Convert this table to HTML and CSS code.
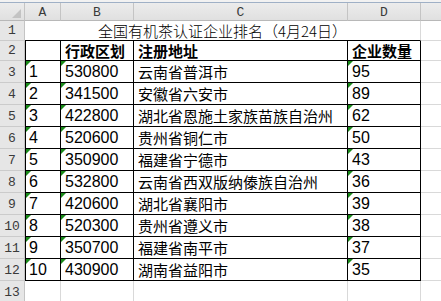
FILE: index.html
```html
<!DOCTYPE html>
<html>
<head>
<meta charset="utf-8">
<link rel="stylesheet" href="styles.css">
</head>
<body>
<div class="strip"></div>
<div class="sheet">
  <div class="ch corner"><span class="selall"></span></div>
  <div class="ch">A</div>
  <div class="ch">B</div>
  <div class="ch">C</div>
  <div class="ch">D</div>
  <div class="ch last"></div>

  <div class="rh">1</div>
  <div class="title zh">全国有机茶认证企业排名（4月24日）</div>
  <div class="cell e"></div>

  <div class="rh">2</div>
  <div class="t ta"></div>
  <div class="t zh b">行政区划</div>
  <div class="t zh b">注册地址</div>
  <div class="t zh b">企业数量</div>
  <div class="cell e"></div>

  <div class="rh">3</div>
  <div class="t ta tri num">1</div>
  <div class="t tri num">530800</div>
  <div class="t zh">云南省普洱市</div>
  <div class="t tri num">95</div>
  <div class="cell e"></div>

  <div class="rh">4</div>
  <div class="t ta tri num">2</div>
  <div class="t tri num">341500</div>
  <div class="t zh">安徽省六安市</div>
  <div class="t tri num">89</div>
  <div class="cell e"></div>

  <div class="rh">5</div>
  <div class="t ta tri num">3</div>
  <div class="t tri num">422800</div>
  <div class="t zh">湖北省恩施土家族苗族自治州</div>
  <div class="t tri num">62</div>
  <div class="cell e"></div>

  <div class="rh">6</div>
  <div class="t ta tri num">4</div>
  <div class="t tri num">520600</div>
  <div class="t zh">贵州省铜仁市</div>
  <div class="t tri num">50</div>
  <div class="cell e"></div>

  <div class="rh">7</div>
  <div class="t ta tri num">5</div>
  <div class="t tri num">350900</div>
  <div class="t zh">福建省宁德市</div>
  <div class="t tri num">43</div>
  <div class="cell e"></div>

  <div class="rh">8</div>
  <div class="t ta tri num">6</div>
  <div class="t tri num">532800</div>
  <div class="t zh">云南省西双版纳傣族自治州</div>
  <div class="t tri num">36</div>
  <div class="cell e"></div>

  <div class="rh">9</div>
  <div class="t ta tri num">7</div>
  <div class="t tri num">420600</div>
  <div class="t zh">湖北省襄阳市</div>
  <div class="t tri num">39</div>
  <div class="cell e"></div>

  <div class="rh">10</div>
  <div class="t ta tri num">8</div>
  <div class="t tri num">520300</div>
  <div class="t zh">贵州省遵义市</div>
  <div class="t tri num">38</div>
  <div class="cell e"></div>

  <div class="rh">11</div>
  <div class="t ta tri num">9</div>
  <div class="t tri num">350700</div>
  <div class="t zh">福建省南平市</div>
  <div class="t tri num">37</div>
  <div class="cell e"></div>

  <div class="rh">12</div>
  <div class="t ta tri num">10</div>
  <div class="t tri num">430900</div>
  <div class="t zh">湖南省益阳市</div>
  <div class="t tri num">35</div>
  <div class="cell e"></div>

  <div class="rh">13</div>
  <div class="cell"></div>
  <div class="cell"></div>
  <div class="cell"></div>
  <div class="cell"></div>
  <div class="cell e"></div>
</div>
</body>
</html>
```

FILE: styles.css
```css
html, body {
  margin: 0;
  padding: 0;
  background: #ffffff;
  overflow: hidden;
}

body {
  width: 441px;
  height: 301px;
}

.strip {
  height: 2px;
  background: #f2f2f2;
  border-bottom: 1px solid #9fb0c6;
}

.sheet {
  display: grid;
  grid-template-columns: 25px 36px 73px 214px 73px 1fr;
  grid-template-rows: 18px 20px 20px repeat(10, 22px) 22px;
  color: #000;
}

.sheet > div {
  box-sizing: border-box;
  position: relative;
  display: flex;
  align-items: center;
  padding-left: 4px;
  white-space: nowrap;
  overflow: hidden;
}

.ch {
  background: linear-gradient(#ececec, #e0e0e0);
  border-right: 1px solid #c4c4c4;
  border-bottom: 1px solid #b8b8b8;
  justify-content: center;
  align-items: flex-end !important;
  padding-left: 0 !important;
  padding-bottom: 0;
  font-family: "Liberation Mono", monospace;
  font-size: 13px;
  line-height: 14px;
  color: #3a3a3a;
}

.ch.last {
  border-right: none;
}

.corner {
  justify-content: flex-end !important;
}

.selall {
  width: 0;
  height: 0;
  border-left: 9px solid transparent;
  border-bottom: 9px solid #c3c3c3;
  margin: 0 3px 2px 0;
}

.rh {
  background: #e6e6e6;
  border-right: 1px solid #c4c4c4;
  border-bottom: 1px solid #cbcbcb;
  justify-content: center;
  align-items: flex-end !important;
  padding-left: 0 !important;
  padding-bottom: 2px;
  font-family: "Liberation Mono", monospace;
  font-size: 13px;
  line-height: 14px;
  color: #3a3a3a;
}

.cell {
  border-right: 1px solid #d9d9d9;
  border-bottom: 1px solid #d9d9d9;
}

.cell.e {
  border-right: none;
}

.title {
  grid-column: 2 / 6;
  justify-content: center;
  padding-left: 0 !important;
  border-right: 1px solid #d9d9d9;
  border-bottom: 1px solid #000;
  font-weight: 300;
}

.t {
  border-right: 1px solid #000;
  border-bottom: 1px solid #000;
}

.ta {
  border-left: 1px solid #000;
  padding-left: 3px !important;
}

.tri::before {
  content: "";
  position: absolute;
  top: 0;
  left: 0;
  width: 0;
  height: 0;
  border-top: 5px solid #1a8a1a;
  border-right: 5px solid transparent;
}

.zh {
  font-family: "Noto Sans CJK SC", sans-serif;
  font-size: 15px;
  line-height: 18px;
}

.b {
  font-weight: 700;
}

.num {
  font-family: "Liberation Sans", "Noto Sans CJK SC", sans-serif;
  font-size: 16px;
  line-height: 18px;
}
```
